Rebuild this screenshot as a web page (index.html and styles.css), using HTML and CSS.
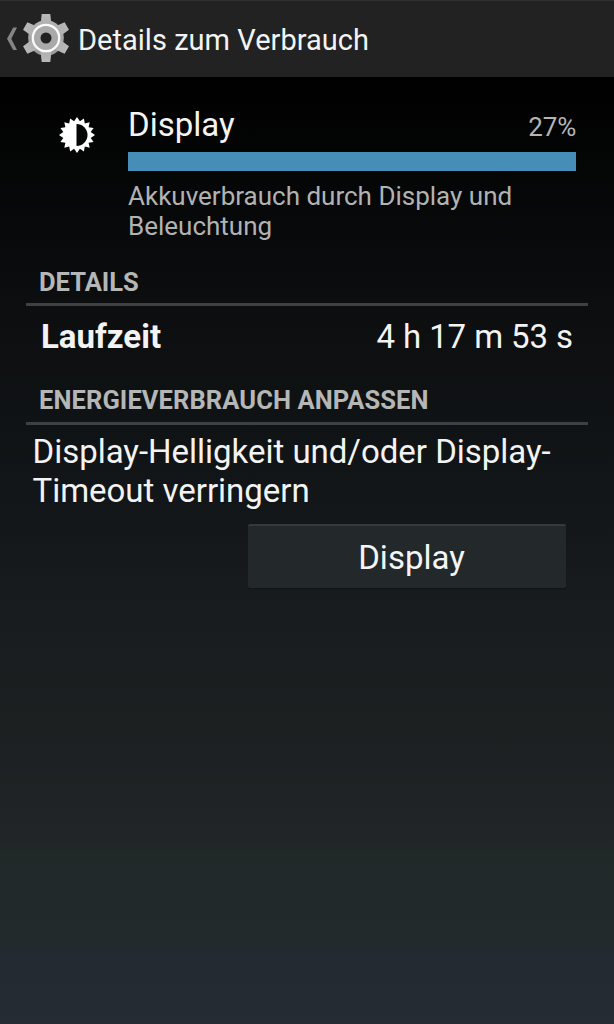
FILE: index.html
```
<!DOCTYPE html>
<html lang="de">
<head>
<meta charset="utf-8">
<title>Details zum Verbrauch</title>
<link rel="stylesheet" href="styles.css">
</head>
<body>
<header class="bar">
  <svg class="back" width="12" height="24" viewBox="0 0 12 24"><path d="M7.2 0.5H11L5.3 11.7L11 23H7.2L1 11.7Z" fill="#858585"/></svg>
  <svg class="gear" width="48" height="50" viewBox="-24 -25 48 50">
    <defs>
      <linearGradient id="metal" gradientUnits="userSpaceOnUse" x1="0" y1="-24" x2="0" y2="24"><stop offset="0" stop-color="#b8b8b8"/><stop offset="1" stop-color="#929292"/></linearGradient>
      <path id="tooth" d="M-4.3 -24H4.3L5.4 -14H-5.4Z"/>
    </defs>
    <g fill="url(#metal)">
      <circle r="17.8"/>
      <use href="#tooth"/><use href="#tooth" transform="rotate(60)"/><use href="#tooth" transform="rotate(120)"/>
      <use href="#tooth" transform="rotate(180)"/><use href="#tooth" transform="rotate(240)"/><use href="#tooth" transform="rotate(300)"/>
    </g>
    <circle r="13.2" fill="#a9a9a9" stroke="#fafafa" stroke-width="2.3"/>
    <circle r="5.5" fill="#202020"/>
  </svg>
  <h1 class="title">Details zum Verbrauch</h1>
</header>
<main>
  <section class="usage">
    <svg class="sun" width="36" height="38" viewBox="-18 -19 36 38">
      <path fill="#fff" d="M0 -18L2.9 -13.7L6.9 -16.6L7.8 -11.6L12.7 -12.7L11.6 -7.8L16.6 -6.9L13.7 -2.9L18 0L13.7 2.9L16.6 6.9L11.6 7.8L12.7 12.7L7.8 11.6L6.9 16.6L2.9 13.7L0 18L-2.9 13.7L-6.9 16.6L-7.8 11.6L-12.7 12.7L-11.6 7.8L-16.6 6.9L-13.7 2.9L-18 0L-13.7 -2.9L-16.6 -6.9L-11.6 -7.8L-12.7 -12.7L-7.8 -11.6L-6.9 -16.6L-2.9 -13.7Z"/>
      <path fill="#050706" d="M-0.5 -11A11 11 0 0 1 -0.5 11Z"/>
    </svg>
    <div class="usage-body">
      <div class="usage-head"><span class="name">Display</span><span class="percent">27%</span></div>
      <div class="meter"></div>
      <p class="desc">Akkuverbrauch durch Display und<br>Beleuchtung</p>
    </div>
  </section>
  <h2 class="section">DETAILS</h2>
  <div class="row"><strong class="key">Laufzeit</strong><span class="value">4 h 17 m 53 s</span></div>
  <h2 class="section second">ENERGIEVERBRAUCH ANPASSEN</h2>
  <p class="hint">Display-Helligkeit und/oder Display-<br>Timeout verringern</p>
  <button class="button">Display</button>
</main>
</body>
</html>
```
FILE: styles.css
```
* { box-sizing: border-box; }
body {
  margin: 0;
  height: 1024px;
  overflow: hidden;
  font-family: Roboto, "Liberation Sans", sans-serif;
  color: #f3f3f3;
  background: linear-gradient(#000 77px, #0c0e0f 310px, #14181a 540px, #181c1e 610px, #1c2021 735px, #222527 840px, #202828 852px, #232a2b 940px, #222930 950px, #262c34 1024px);
}
h1, h2, p { margin: 0; font-weight: 400; }
svg { display: block; flex: none; }
.bar {
  height: 77px;
  display: flex;
  align-items: center;
  padding: 0 0 2px 6px;
  background: #222;
  border-top: 1px solid #303030;
}
.back { margin-top: 2px; }
.gear { margin-left: 3.5px; }
.title { margin: 4px 0 0 8.5px; font-size: 29px; line-height: 34px; letter-spacing: 0.03px; white-space: nowrap; }
.usage { display: flex; height: 189px; padding: 28px 38px 0 59px; }
.sun { margin-top: 11px; }
.usage-body { flex: 1; margin-left: 33px; }
.usage-head { height: 47px; display: flex; justify-content: space-between; align-items: baseline; line-height: 40px; }
.name { font-size: 33px; }
.percent { font-size: 26px; letter-spacing: -0.2px; color: #b4b5b5; }
.meter { height: 19px; background: #468db8; }
.desc { margin-top: 10px; font-size: 26px; line-height: 30px; color: #b1b3b3; white-space: nowrap; }
.section {
  height: 40px;
  margin: 0 26px;
  padding: 0 0 0 13px;
  border-bottom: 3px solid #3e4142;
  font-size: 25.5px;
  font-weight: 700;
  line-height: 32px;
  color: #b5b7b7;
}
.row {
  height: 61px;
  display: flex;
  justify-content: space-between;
  padding: 0 41px;
  font-size: 33px;
  line-height: 61px;
}
.value { letter-spacing: -0.1px; }
.second { margin-top: 18px; line-height: 30px; letter-spacing: 0.09px; }
.hint { padding: 7px 0 0 32.5px; height: 99px; font-size: 33px; line-height: 39px; letter-spacing: -0.02px; white-space: nowrap; }
.button {
  display: block;
  width: 318px;
  height: 64px;
  margin-left: 248px;
  padding: 0 0 0 9px;
  border: 0;
  border-top: 2px solid #343a3c;
  border-radius: 2px;
  background: #23292b;
  color: #f3f5f6;
  font: 33px Roboto, sans-serif;
  box-shadow: 0 1px 1px #111517;
}
```
